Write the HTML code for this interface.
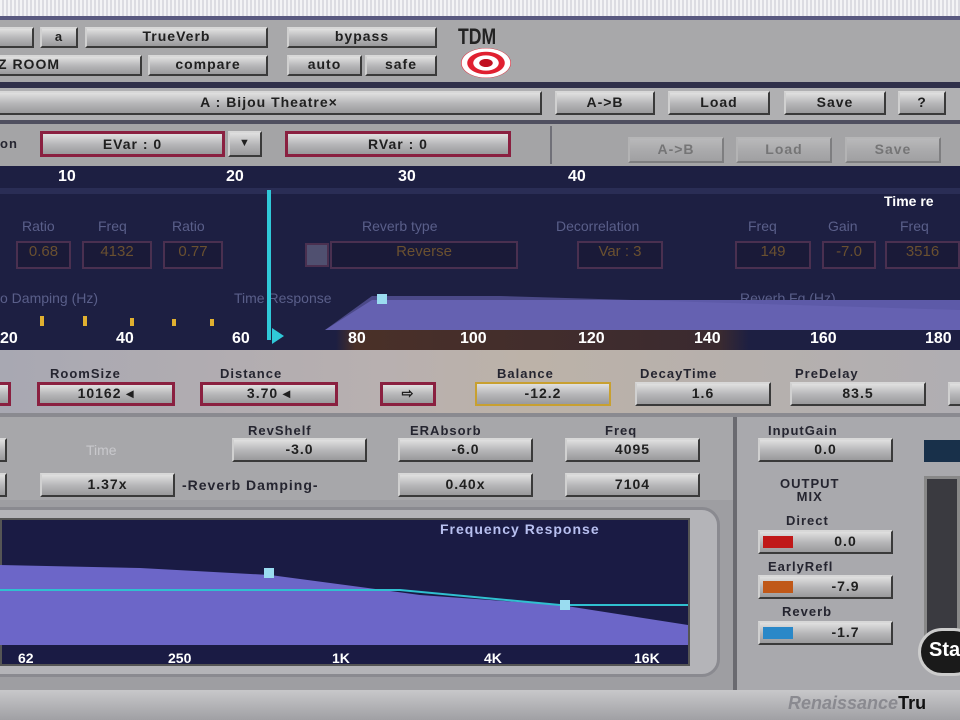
<!DOCTYPE html>
<html><head><meta charset="utf-8"><style>
*{margin:0;padding:0;box-sizing:border-box}
body{width:960px;height:720px;overflow:hidden;background:#a9a9ab;font-family:"Liberation Sans",sans-serif;position:relative}
.a{position:absolute}
.b{position:absolute;background:linear-gradient(#e0e0e0,#b4b4b6 55%,#9a9a9c);border:2px solid #3a3a3a;border-top-color:#d8d8d8;border-left-color:#d0d0d0;color:#202020;font-weight:bold;font-size:14px;text-align:center;letter-spacing:1px}
.l{position:absolute;color:#252530;font-weight:bold;font-size:13px;text-align:center;letter-spacing:1px}
.r{border-color:#8a2040!important;border-width:3px!important}
.t{position:absolute;color:#fff;font-size:16px;font-weight:bold}
.d{position:absolute;color:#5a5f8a;font-size:14px}
.o{position:absolute;border:2px solid #4a3050;color:#6a5030;font-size:15px;text-align:center;background:#1a1a38}
</style></head><body>
<!-- top strip -->
<div class="a" style="left:0;top:0;width:960px;height:16px;background:repeating-linear-gradient(90deg,#f4f4f6 0 2px,#dcdce2 2px 4px)"></div>
<div class="a" style="left:0;top:16px;width:960px;height:4px;background:#5a5a80"></div>
<div class="a" style="left:0;top:20px;width:960px;height:62px;background:#a8a8aa"></div>
<div class="b" style="left:-4px;top:27px;width:38px;height:21px"></div>
<div class="b" style="left:40px;top:27px;width:38px;height:21px;font-size:13px">a</div>
<div class="b" style="left:85px;top:27px;width:183px;height:21px;line-height:15px">TrueVerb</div>
<div class="b" style="left:287px;top:27px;width:150px;height:21px;line-height:15px">bypass</div>
<div class="b" style="left:-4px;top:55px;width:146px;height:21px;line-height:15px;text-align:left">Z ROOM</div>
<div class="b" style="left:148px;top:55px;width:120px;height:21px;line-height:15px">compare</div>
<div class="b" style="left:287px;top:55px;width:75px;height:21px;line-height:15px">auto</div>
<div class="b" style="left:365px;top:55px;width:72px;height:21px;line-height:15px">safe</div>
<div class="a" style="left:458px;top:24px;font-size:22px;font-weight:bold;color:#222;transform:scaleX(.8);transform-origin:left">TDM</div>
<div class="a" style="left:461px;top:48px;width:50px;height:30px;border-radius:50%;background:radial-gradient(#c01020 0 18%,#fff 20% 35%,#e02030 37% 52%,#fff 54% 68%,#e02030 70% 100%)"></div>
<div class="a" style="left:0;top:82px;width:960px;height:6px;background:#30304a"></div>
<div class="a" style="left:0;top:88px;width:960px;height:32px;background:#b0b0b2"></div>
<div class="b" style="left:-4px;top:91px;width:546px;height:24px;line-height:18px">A : Bijou Theatre×</div>
<div class="b" style="left:555px;top:91px;width:100px;height:24px;line-height:18px">A-&gt;B</div>
<div class="b" style="left:668px;top:91px;width:102px;height:24px;line-height:18px">Load</div>
<div class="b" style="left:784px;top:91px;width:102px;height:24px;line-height:18px">Save</div>
<div class="b" style="left:898px;top:91px;width:48px;height:24px;line-height:18px">?</div>
<div class="a" style="left:0;top:120px;width:960px;height:4px;background:#505060"></div>
<div class="a" style="left:0;top:124px;width:960px;height:42px;background:#a4a4a6"></div>
<div class="l" style="left:0;top:136px">on</div>
<div class="b r" style="left:40px;top:131px;width:185px;height:26px;line-height:20px">EVar : 0</div>
<div class="b" style="left:228px;top:131px;width:34px;height:26px;line-height:20px;font-size:11px">▼</div>
<div class="b r" style="left:285px;top:131px;width:226px;height:26px;line-height:20px">RVar : 0</div>
<div class="a" style="left:550px;top:126px;width:2px;height:38px;background:#707078"></div>
<div class="b" style="left:628px;top:137px;width:96px;height:26px;opacity:.35;line-height:20px">A-&gt;B</div>
<div class="b" style="left:736px;top:137px;width:96px;height:26px;opacity:.35;line-height:20px">Load</div>
<div class="b" style="left:845px;top:137px;width:96px;height:26px;opacity:.35;line-height:20px">Save</div>
<!-- dark area -->
<div class="a" style="left:0;top:166px;width:960px;height:184px;background:#1d1f42"></div>
<div class="a" style="left:0;top:188px;width:960px;height:6px;background:#2a2d55"></div>
<div class="t" style="left:58px;top:168px">10</div><div class="t" style="left:226px;top:168px">20</div>
<div class="t" style="left:398px;top:168px">30</div><div class="t" style="left:568px;top:168px">40</div>
<div class="t" style="left:884px;top:193px;font-size:14px">Time re</div>
<div class="d" style="left:22px;top:218px">Ratio</div><div class="d" style="left:98px;top:218px">Freq</div><div class="d" style="left:172px;top:218px">Ratio</div>
<div class="d" style="left:362px;top:218px">Reverb type</div><div class="d" style="left:556px;top:218px">Decorrelation</div>
<div class="d" style="left:748px;top:218px">Freq</div><div class="d" style="left:828px;top:218px">Gain</div><div class="d" style="left:900px;top:218px">Freq</div>
<div class="o" style="left:16px;top:241px;width:55px;height:28px">0.68</div>
<div class="o" style="left:82px;top:241px;width:70px;height:28px">4132</div>
<div class="o" style="left:163px;top:241px;width:60px;height:28px">0.77</div>
<div class="o" style="left:305px;top:243px;width:24px;height:24px;background:#505070"></div>
<div class="o" style="left:330px;top:241px;width:188px;height:28px">Reverse</div>
<div class="o" style="left:577px;top:241px;width:86px;height:28px">Var : 3</div>
<div class="o" style="left:735px;top:241px;width:76px;height:28px">149</div>
<div class="o" style="left:822px;top:241px;width:54px;height:28px">-7.0</div>
<div class="o" style="left:885px;top:241px;width:75px;height:28px">3516</div>
<div class="d" style="left:0;top:290px">o Damping (Hz)</div><div class="d" style="left:234px;top:290px">Time Response</div><div class="d" style="left:740px;top:290px">Reverb Fq (Hz)</div>
<svg class="a" style="left:0;top:288px" width="960" height="45"><polygon points="325,42 372,12 960,12 960,42" fill="#5d5aa8"/><polygon points="325,42 372,8 500,8 960,22 960,42" fill="#6a66b8" opacity=".6"/><rect x="377" y="6" width="10" height="10" fill="#9adcf0"/><g fill="#e0b030"><rect x="40" y="28" width="4" height="10"/><rect x="83" y="28" width="4" height="10"/><rect x="130" y="30" width="4" height="8"/><rect x="172" y="31" width="4" height="7"/><rect x="210" y="31" width="4" height="7"/></g></svg>
<div class="a" style="left:0;top:330px;width:960px;height:20px;background:linear-gradient(90deg,#1d1f42 0 35%,#4a3028 37%,#3a2a30 75%,#1d1f42 78%)"></div>
<div class="t" style="left:0;top:330px">20</div><div class="t" style="left:116px;top:330px">40</div><div class="t" style="left:232px;top:330px">60</div>
<div class="t" style="left:348px;top:330px">80</div><div class="t" style="left:460px;top:330px">100</div><div class="t" style="left:578px;top:330px">120</div>
<div class="t" style="left:694px;top:330px">140</div><div class="t" style="left:810px;top:330px">160</div><div class="t" style="left:925px;top:330px">180</div>
<div class="a" style="left:267px;top:190px;width:4px;height:150px;background:#30c8d8"></div>
<div class="a" style="left:272px;top:328px;width:0;height:0;border-left:12px solid #30c8d8;border-top:8px solid transparent;border-bottom:8px solid transparent"></div>
<!-- control row -->
<div class="a" style="left:0;top:350px;width:960px;height:68px;background:linear-gradient(90deg,#a8a8b2,#b8b0b0 40%,#bcb2a8 55%,#b0aeb2)"></div>
<div class="l" style="left:50px;top:366px">RoomSize</div><div class="l" style="left:220px;top:366px">Distance</div>
<div class="l" style="left:497px;top:366px">Balance</div><div class="l" style="left:640px;top:366px">DecayTime</div><div class="l" style="left:795px;top:366px">PreDelay</div>
<div class="b r" style="left:-5px;top:382px;width:16px;height:24px"></div>
<div class="b r" style="left:37px;top:382px;width:138px;height:24px;line-height:17px">10162 ◂</div>
<div class="b r" style="left:200px;top:382px;width:138px;height:24px;line-height:17px">3.70 ◂</div>
<div class="b r" style="left:380px;top:382px;width:56px;height:24px;line-height:17px">⇨</div>
<div class="b" style="left:475px;top:382px;width:136px;height:24px;line-height:18px;border-color:#c8a030">-12.2</div>
<div class="b" style="left:635px;top:382px;width:136px;height:24px;line-height:18px">1.6</div>
<div class="b" style="left:790px;top:382px;width:136px;height:24px;line-height:18px">83.5</div>
<div class="b" style="left:948px;top:382px;width:20px;height:24px"></div>
<div class="a" style="left:0;top:413px;width:960px;height:4px;background:#8a8a90"></div>
<!-- middle panel -->
<div class="a" style="left:0;top:417px;width:735px;height:90px;background:#a7a7aa"></div>
<div class="l" style="left:248px;top:423px">RevShelf</div><div class="l" style="left:410px;top:423px">ERAbsorb</div><div class="l" style="left:605px;top:423px">Freq</div>
<div class="a" style="left:86px;top:442px;color:#c8c8cc;font-size:14px">Time</div>
<div class="b" style="left:-5px;top:438px;width:12px;height:24px"></div>
<div class="b" style="left:232px;top:438px;width:135px;height:24px;line-height:18px">-3.0</div>
<div class="b" style="left:398px;top:438px;width:135px;height:24px;line-height:18px">-6.0</div>
<div class="b" style="left:565px;top:438px;width:135px;height:24px;line-height:18px">4095</div>
<div class="b" style="left:-5px;top:473px;width:12px;height:24px"></div>
<div class="b" style="left:40px;top:473px;width:135px;height:24px;line-height:18px">1.37x</div>
<div class="l" style="left:182px;top:477px;font-size:14px">-Reverb Damping-</div>
<div class="b" style="left:398px;top:473px;width:135px;height:24px;line-height:18px">0.40x</div>
<div class="b" style="left:565px;top:473px;width:135px;height:24px;line-height:18px">7104</div>
<!-- freq response -->
<div class="a" style="left:0;top:500px;width:735px;height:190px;background:#9e9ea2"></div>
<div class="a" style="left:-20px;top:507px;width:740px;height:170px;border-radius:18px;background:#b4b4b8;border:3px solid #8a8a90"></div>
<div class="a" style="left:0;top:518px;width:690px;height:148px;background:#1a1b44;border:2px solid #555"></div>
<svg class="a" style="left:0;top:520px" width="688" height="125"><polygon points="0,45 140,48 270,55 420,75 560,85 688,105 688,125 0,125" fill="#6c66c8"/><polyline points="0,70 400,70 560,85 688,85" stroke="#30c0d0" stroke-width="2" fill="none"/><rect x="264" y="48" width="10" height="10" fill="#9adcf0"/><rect x="560" y="80" width="10" height="10" fill="#9adcf0"/></svg>
<div class="a" style="left:440px;top:521px;color:#b8c0f0;font-size:14px;font-weight:bold;letter-spacing:1px">Frequency Response</div>
<div class="t" style="left:18px;top:650px;font-size:14px">62</div><div class="t" style="left:168px;top:650px;font-size:14px">250</div>
<div class="t" style="left:332px;top:650px;font-size:14px">1K</div><div class="t" style="left:484px;top:650px;font-size:14px">4K</div><div class="t" style="left:634px;top:650px;font-size:14px">16K</div>
<!-- right panel -->
<div class="a" style="left:733px;top:417px;width:4px;height:273px;background:#6a6a70"></div>
<div class="a" style="left:737px;top:417px;width:223px;height:273px;background:#a9a9ad"></div>
<div class="l" style="left:768px;top:423px">InputGain</div>
<div class="b" style="left:758px;top:438px;width:135px;height:24px;line-height:18px">0.0</div>
<div class="a" style="left:924px;top:440px;width:40px;height:22px;background:#18304a"></div>
<div class="l" style="left:780px;top:477px;line-height:13px">OUTPUT<br>MIX</div>
<div class="l" style="left:786px;top:513px">Direct</div>
<div class="l" style="left:768px;top:559px">EarlyRefl</div>
<div class="l" style="left:782px;top:604px">Reverb</div>
<div class="b" style="left:758px;top:530px;width:135px;height:24px;line-height:18px;padding-left:40px">0.0</div>
<div class="b" style="left:758px;top:575px;width:135px;height:24px;line-height:18px;padding-left:40px">-7.9</div>
<div class="b" style="left:758px;top:621px;width:135px;height:24px;line-height:18px;padding-left:40px">-1.7</div>
<div class="a" style="left:763px;top:536px;width:30px;height:12px;background:#c01818"></div>
<div class="a" style="left:763px;top:581px;width:30px;height:12px;background:#c05818"></div>
<div class="a" style="left:763px;top:627px;width:30px;height:12px;background:#2a88c8"></div>
<div class="a" style="left:924px;top:476px;width:36px;height:160px;background:#3a3a40;border:3px solid #888"></div>
<div class="a" style="left:918px;top:628px;width:60px;height:48px;border-radius:24px;background:#1a1a1a;border:3px solid #ccc;color:#fff;font-size:20px;font-weight:bold;padding:8px 0 0 8px">Stag</div>
<!-- bottom -->
<div class="a" style="left:0;top:690px;width:960px;height:30px;background:linear-gradient(#c8c8ca,#a0a0a4)"></div>
<div class="a" style="left:788px;top:693px;color:#8a8a90;font-style:italic;font-size:18px;font-weight:bold">Renaissance<span style="color:#111;font-style:normal">Tru</span></div>
</body></html>
